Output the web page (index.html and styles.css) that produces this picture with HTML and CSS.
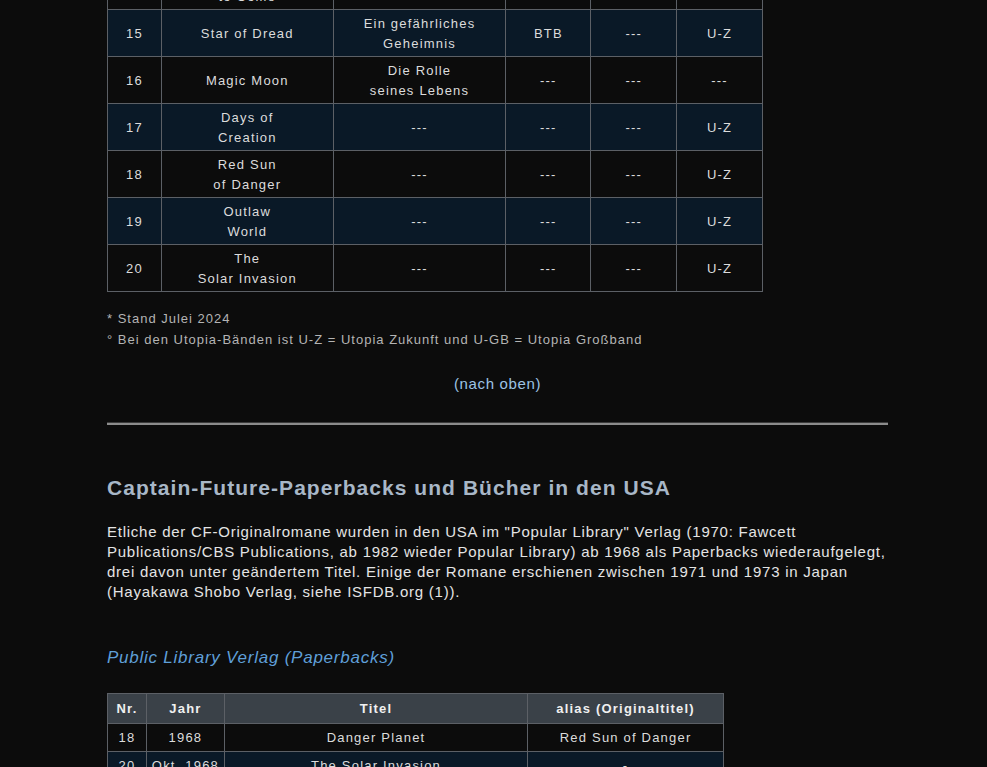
FILE: index.html
```html
<!DOCTYPE html>
<html lang="de">
<head>
<meta charset="utf-8">
<title>Captain Future</title>
<link rel="stylesheet" href="styles.css">
</head>
<body>
<main class="content">
  <table class="books">
    <tr class="dark"><td>14</td><td>Worlds<br>to Come</td><td>---</td><td>---</td><td>---</td><td>---</td></tr>
    <tr class="blue"><td>15</td><td>Star of Dread</td><td>Ein gefährliches<br>Geheimnis</td><td>BTB</td><td>---</td><td>U-Z</td></tr>
    <tr class="dark"><td>16</td><td>Magic Moon</td><td>Die Rolle<br>seines Lebens</td><td>---</td><td>---</td><td>---</td></tr>
    <tr class="blue"><td>17</td><td>Days of<br>Creation</td><td>---</td><td>---</td><td>---</td><td>U-Z</td></tr>
    <tr class="dark"><td>18</td><td>Red Sun<br>of Danger</td><td>---</td><td>---</td><td>---</td><td>U-Z</td></tr>
    <tr class="blue"><td>19</td><td>Outlaw<br>World</td><td>---</td><td>---</td><td>---</td><td>U-Z</td></tr>
    <tr class="dark"><td>20</td><td>The<br>Solar Invasion</td><td>---</td><td>---</td><td>---</td><td>U-Z</td></tr>
  </table>

  <p class="notes">* Stand Julei 2024<br>° Bei den Utopia-Bänden ist U-Z = Utopia Zukunft und U-GB = Utopia Großband</p>

  <p class="top"><a href="#">(nach oben)</a></p>

  <hr class="rule">

  <h2 class="heading">Captain-Future-Paperbacks und Bücher in den USA</h2>

  <p class="text">Etliche der CF-Originalromane wurden in den USA im "Popular Library" Verlag (1970: Fawcett Publications/CBS Publications, ab 1982 wieder Popular Library) ab 1968 als Paperbacks wiederaufgelegt, drei davon unter geändertem Titel. Einige der Romane erschienen zwischen 1971 und 1973 in Japan (Hayakawa Shobo Verlag, siehe ISFDB.org (1)).</p>

  <h3 class="subheading">Public Library Verlag (Paperbacks)</h3>

  <table class="paper">
    <tr class="head"><th class="c1">Nr.</th><th class="c2">Jahr</th><th class="c3">Titel</th><th class="c4">alias (Originaltitel)</th></tr>
    <tr class="dark"><td>18</td><td>1968</td><td>Danger Planet</td><td>Red Sun of Danger</td></tr>
    <tr class="blue"><td>20</td><td>Okt. 1968</td><td>The Solar Invasion</td><td>-</td></tr>
  </table>
</main>
</body>
</html>
```

FILE: styles.css
```css
html, body {
  margin: 0;
  padding: 0;
  background: #0c0c0c;
}

body {
  font-family: "Liberation Sans", Arial, sans-serif;
  color: #e2e2e2;
  letter-spacing: 1px;
  overflow: hidden;
  height: 767px;
}

.content {
  width: 781px;
  margin-left: 107px;
}

table {
  border-collapse: collapse;
  font-size: 13px;
  letter-spacing: 1.2px;
  line-height: 20px;
  color: #dcdcdc;
}

td, th {
  border: 1px solid #5c6066;
  text-align: center;
  vertical-align: middle;
}

.books {
  margin-top: -38px;
  width: 656px;
}

.books td {
  padding: 4px 4px 2px;
  height: 40px;
}

.books td:nth-child(1) { width: 45px; }
.books td:nth-child(2) { width: 163px; }
.books td:nth-child(3) { width: 164px; }
.books td:nth-child(4) { width: 76px; }
.books td:nth-child(5) { width: 77px; }
.books td:nth-child(6) { width: 77px; }

tr.blue { background: #0a1927; }
tr.dark { background: #0c0c0c; }

.notes {
  margin: 16px 0 0;
  font-size: 13px;
  line-height: 21px;
  color: #b4b4b4;
}

.top {
  margin: 24px 0 0;
  text-align: center;
  font-size: 15px;
  line-height: 20px;
  letter-spacing: 0.65px;
}

.top a {
  color: #9cc3e4;
  text-decoration: none;
}

.rule {
  margin: 28px 0 0;
  height: 0;
  border: 0;
  border-top: 1px solid #3a3a3a;
  border-bottom: 2px solid #8c8c8c;
}

.heading {
  margin: 49px 0 0;
  font-size: 21px;
  line-height: 28px;
  font-weight: bold;
  letter-spacing: 1.05px;
  color: #a8b7c7;
}

.text {
  margin: 20px 0 0;
  font-size: 15px;
  line-height: 20px;
  letter-spacing: 0.75px;
  color: #e4e4e4;
}

.subheading {
  margin: 44px 0 0;
  font-size: 17px;
  line-height: 24px;
  font-weight: normal;
  font-style: italic;
  letter-spacing: 0.76px;
  color: #5f9fd8;
}

.paper {
  margin-top: 23px;
  width: 617px;
}

.paper th {
  background: #3a4148;
  color: #f0f0f0;
  font-weight: bold;
  padding: 5px 4px 4px;
}

.paper td {
  padding: 4px 4px 3px;
}

.paper .c1 { width: 30px; }
.paper .c2 { width: 69px; }
.paper .c3 { width: 295px; }
.paper .c4 { width: 187px; }
```
